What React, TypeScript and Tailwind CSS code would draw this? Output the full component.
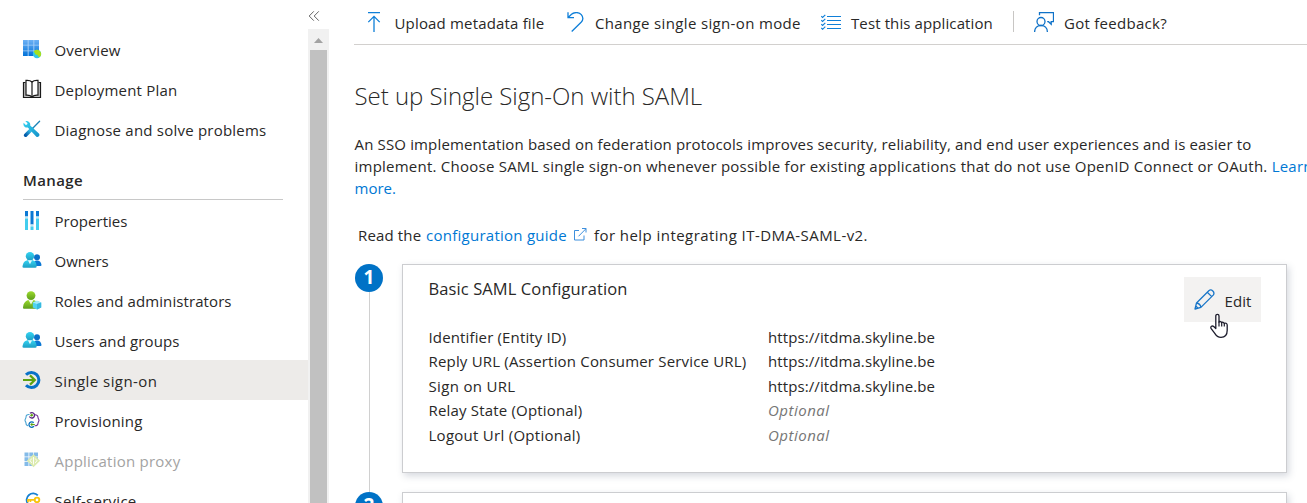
import React from "react";

type IconProps = { className?: string };

const OverviewIcon = () => (
  <svg width="20" height="20" viewBox="0 0 20 20">
    <defs>
      <linearGradient id="ov" x1="0" y1="0" x2="0" y2="1">
        <stop offset="0" stopColor="#6db1f5" />
        <stop offset="1" stopColor="#0272d8" />
      </linearGradient>
    </defs>
    <rect x="1" y="1" width="16" height="16" fill="#a9d0f8" />
    <path
      fill="url(#ov)"
      d="M1 1h4.700v4.700H1zM6.600 1h4.800v4.700H6.600zM12.300 1H17v4.700h-4.700zM1 6.600h4.700v4.800H1zM6.600 6.600h4.800v4.800H6.600zM12.300 6.600H17v4.800h-4.700zM1 12.300h4.700V17H1zM6.600 12.300h4.800V17H6.600zM12.300 12.300H17V17h-4.700z"
    />
    <circle cx="15" cy="15" r="4.200" fill="#32c8e6" />
    <path d="M12.300 11.800c1.600-1.400 4-1.300 5.600.2 1.500 1.500 1.700 3.800.4 5.500-.8.7-2 .6-2.300-.5-.2-1.200-.8-1.200-1.800-1.300-1.200 0-1-1.200-1.600-1.900-.5-.6-1.300-1-.3-2z" fill="#a8e01c" />
  </svg>
);

const BookIcon = () => (
  <svg width="20" height="20" viewBox="0 0 20 20" fill="none">
    <path d="M3.500 3.500H1.500v15h17v-15h-2" fill="#bdbdbd" stroke="#1a1a1a" strokeWidth="1.200" />
    <path d="M10 3C8.500 1.500 6 1.200 4 1.400v14.800c2.400-.2 4.600.1 6 2 1.400-1.900 3.600-2.200 6-2V1.400C14 1.200 11.500 1.500 10 3z" fill="#fff" stroke="#1a1a1a" strokeWidth="1.200" />
    <path d="M10 3v15" stroke="#1a1a1a" strokeWidth="1.200" />
  </svg>
);

const ToolsIcon = () => (
  <svg width="20" height="20" viewBox="0 0 20 20" fill="none">
    <defs>
      <linearGradient id="tl" x1="1" y1="0" x2="0" y2="1">
        <stop offset=".3" stopColor="#32b8e4" />
        <stop offset="1" stopColor="#0259a8" />
      </linearGradient>
      <linearGradient id="tl2" x1="0" y1="0" x2="1" y2="1">
        <stop offset="0" stopColor="#37d4f2" />
        <stop offset="1" stopColor="#1490c8" />
      </linearGradient>
    </defs>
    <path d="M17.600 2.200L10 10" stroke="#1b84b8" strokeWidth="1.300" strokeLinecap="round" />
    <path d="M9.800 9.900L3.600 16.200" stroke="url(#tl)" strokeWidth="3.600" strokeLinecap="round" />
    <path d="M3.300 2.100l2.200 2.100-.4 1.300-1.300.4-2.200-2.100c-.5 1.700 0 3.300 1.200 4.100.9.700 2 .8 3 .5l8.300 9c1.900 1.700 4.500-.8 2.800-2.800L8.200 6.500c.6-2.600-1.900-5.100-4.900-4.400z" fill="url(#tl2)" />
  </svg>
);

const PropertiesIcon = () => (
  <svg width="20" height="20" viewBox="0 0 20 20">
    <path fill="#0b78d4" d="M3 1h3v5.500H3zM8.500 1h3v13.500h-3zM14 1h3v5.500h-3z" />
    <path fill="#bfe6f5" d="M3 6.500h3v2H3zM8.500 14.500h3v2h-3zM14 6.500h3v2h-3z" />
    <path fill="#43cdee" d="M3 8.500h3V20H3zM8.500 16.500h3V20h-3zM14 8.500h3V20h-3z" />
  </svg>
);

const PeopleIcon = () => (
  <svg width="20" height="20" viewBox="0 -1 20 20">
    <defs>
      <linearGradient id="pp" x1="0" y1="0" x2="0" y2="1">
        <stop offset="0" stopColor="#34d4f3" />
        <stop offset="1" stopColor="#1e9fc4" />
      </linearGradient>
    </defs>
    <circle cx="15" cy="6.300" r="3" fill="#0b6fc8" />
    <path d="M11 15c0-3.600 1.300-5.600 4-5.600s4.300 2 4.500 4.600c0 .7-.3 1-.9 1z" fill="#0b78d4" />
    <circle cx="8" cy="5.200" r="4.200" fill="url(#pp)" />
    <path d="M.5 15.500C.9 11.700 2.700 9 8 9s6.600 2.700 6.600 6.500c0 .8-.4 1.200-1.100 1.200H1.500c-.7 0-1-.4-1-1.200z" fill="url(#pp)" />
    <path d="M5.900 9.200L8 13.200l2.100-4z" fill="#e6fafe" />
  </svg>
);

const RolesIcon = () => (
  <svg width="20" height="20" viewBox="0 0 20 20">
    <defs>
      <linearGradient id="rl" x1="0" y1="0" x2="0" y2="1">
        <stop offset="0" stopColor="#9bdb2c" />
        <stop offset="1" stopColor="#5e9e1c" />
      </linearGradient>
    </defs>
    <circle cx="9" cy="5.600" r="4.400" fill="url(#rl)" />
    <path d="M1 17.500C1.500 13 3.500 9.800 9 9.800s7 3.200 7.300 7.700c0 .9-.4 1.300-1.200 1.300H2.200C1.400 18.800 1 18.400 1 17.500z" fill="url(#rl)" />
    <path d="M6.500 10l2.500 4.600 2.500-4.600z" fill="#f2fbe4" />
    <path d="M15 10.700l4.200 1.700v5L15 19.500l-4.200-2.100v-5z" fill="#50d4f2" />
    <path d="M15 14l4.200-1.600L15 10.700l-4.200 1.700z" fill="#a3eafa" />
    <path d="M15 14v5.500l4.200-2.100v-5z" fill="#38b9e0" />
  </svg>
);

const SignOnIcon = () => (
  <svg width="20" height="20" viewBox="0 0 20 20" fill="none">
    <path d="M4 4.800A7.500 7.500 0 1 1 4 15.200" stroke="#0872c8" strokeWidth="3" />
    <path d="M1 10h11M8 5.400l4.800 4.600L8 14.600" stroke="#5ca30f" strokeWidth="2.200" />
  </svg>
);

const ProvisioningIcon = () => (
  <svg width="20" height="20" viewBox="0 0 20 20" fill="none">
    <path d="M7.500 4.600C5.300 4.200 4 5.300 4 7.200 4 8.500 3 9 3 10.200s1 1.700 1 3c0 1.500.7 2.300 2.200 2.500" stroke="#4da5d4" strokeWidth="1.100" />
    <path d="M12.500 4.800c2.200-.2 3.500.8 3.500 2.600 0 1.300 1 1.700 1 2.900s-1 1.700-1 3c0 1.800-1.400 2.600-3.400 2.400" stroke="#6d2f92" strokeWidth="1.100" />
    <path d="M7.400 6.500a2.700 2.700 0 1 0 .6-3.200" stroke="#5c2686" strokeWidth="1.300" />
    <path d="M11.700 12.800a2.700 2.700 0 1 0 .2 3.300" stroke="#0b70bd" strokeWidth="1.300" />
    <path d="M8 5.200h2.600M9.300 4l1.300 1.200-1.300 1.200M12.800 14.500H9M10.300 13.300L9 14.500l1.300 1.200" stroke="#5ca30f" strokeWidth="1.100" />
  </svg>
);

const ProxyIcon = () => (
  <svg width="20" height="20" viewBox="0 0 20 20">
    <path fill="#84bbe8" d="M2.500 2.500h4v4h-4zM7.300 2.500h4v4h-4zM12 2.500h4v4h-4zM2.500 7.300h4v4h-4zM7.300 7.300h4v4h-4zM12 7.300h4v4h-4zM2.500 12h4v4h-4zM7.300 12h4v4h-4z" />
    <path fill="#dcebaf" d="M11.500 4.300l6.600 6.500-6.600 6.500-6.600-6.500z" />
    <path fill="none" stroke="#fff" strokeWidth=".9" d="M11.500 7v7.500M9.800 8.500L8 10.700l1.800 2.200M13.200 8.500l1.800 2.200-1.800 2.200" />
  </svg>
);

const SelfServiceIcon = () => (
  <svg width="20" height="20" viewBox="0 0 20 20" fill="none">
    <path d="M15.800 5.400A6.500 6.500 0 1 0 14.500 15.500" stroke="#1681d2" strokeWidth="1.800" />
    <circle cx="15" cy="9.900" r="2.300" stroke="#f8c40a" strokeWidth="1.900" />
    <path d="M12.700 9.900H6v2.300M8.400 9.900v2" stroke="#f8c40a" strokeWidth="1.700" />
  </svg>
);

const UploadIcon = ({ className }: IconProps) => (
  <svg className={className} width="14" height="20" viewBox="0 0 14 20" fill="none" stroke="#0f7fd8" strokeWidth="1.300">
    <path d="M1 .7h12M7 20V4.500M1.300 10.100L7 4.400l5.700 5.700" />
  </svg>
);

const UndoIcon = ({ className }: IconProps) => (
  <svg className={className} width="17" height="20" viewBox="0 0 17 20" fill="none" stroke="#0f7fd8" strokeWidth="1.300">
    <path d="M1 .2v5.500h6M1.200 5.500L4.500 2.200C7.500-.1 12 0 14.300 2.700c2 2.400 1.800 5.400-.2 7.600L4.700 19.500" />
  </svg>
);

const ChecklistIcon = ({ className }: IconProps) => (
  <svg className={className} width="20" height="16" viewBox="0 0 20 16" fill="none" stroke="#0f7fd8">
    <path strokeWidth="1.200" d="M6 2.500h14M6 6.500h14M6 10.500h14M6 14.500h14" />
    <path strokeWidth="1.100" d="M.3 2.200l1.300 1.300L4.300.8M.3 6.200l1.300 1.300 2.700-2.700M.3 10.200l1.300 1.300 2.700-2.700M.3 14l1.300 1.300 2.700-2.700" />
  </svg>
);

const FeedbackIcon = ({ className }: IconProps) => (
  <svg className={className} width="20" height="20" viewBox="0 0 20 20" fill="none" stroke="#0f72c8" strokeWidth="1.300">
    <path d="M5.500 3.200V.7h14v9h-2.300v2.600l-2.700-2.600h-1.300" />
    <circle cx="7" cy="9.500" r="4" />
    <path d="M.6 20c0-4 2.700-6.500 6.400-6.500s6.400 2.500 6.400 6.500" />
  </svg>
);

const ExternalIcon = ({ className }: IconProps) => (
  <svg className={className} width="13" height="13" viewBox="0 0 13 13" fill="none" stroke="#3d8fdd" strokeWidth="1">
    <path d="M5 2.500H.5v9.500h9.500V7.500M8 .5h4v4M12 .7L4.500 8.300" />
  </svg>
);

const PencilIcon = ({ className }: IconProps) => (
  <svg className={className} width="21" height="21" viewBox="0 0 21 21" fill="none" stroke="#1976c8" strokeWidth="1.300" strokeLinejoin="round">
    <path d="M1 20l1.500-6L14.800 1.700c2.700-2.300 6.600 1.500 4.400 4.400L6.900 18.400zM13.300 3.200l4.400 4.400M2.500 14c2.400.3 4 1.800 4.400 4.400M1.800 17l2 2" />
  </svg>
);

const HandCursor = () => (
  <svg className="absolute left-[25px] top-[36px]" width="20" height="26" viewBox="0 0 20 26">
    <path
      d="M6.800 15.500V3c0-2.300 3.200-2.300 3.200 0v6.200c.6-1.100 2.300-.8 2.600.5.800-.9 2.400-.5 2.600.8 1.200-.9 3-.3 3 1.600v5.200c0 4.400-2.400 7-6.200 7-3.300 0-4.800-1.500-6.400-4.200l-3.600-4.700c-.9-1.700 1.200-3.200 2.700-1.900z"
      fill="#fff"
      stroke="#1c1c2c"
      strokeWidth="1.300"
      strokeLinejoin="round"
    />
    <path d="M10 8.500v5M12.700 9.800v3.700M15.300 10.500v3" stroke="#1c1c2c" strokeWidth="1.200" />
  </svg>
);

type Item = { label: string; track: string; icon: React.ReactNode; active?: boolean; muted?: boolean };

const topItems: Item[] = [
  { label: "Overview", track: "tracking-[0.120px]", icon: <OverviewIcon /> },
  { label: "Deployment Plan", track: "tracking-[0.200px]", icon: <BookIcon /> },
  { label: "Diagnose and solve problems", track: "tracking-[0.220px]", icon: <ToolsIcon /> },
];

const manageItems: Item[] = [
  { label: "Properties", track: "tracking-[0.040px]", icon: <PropertiesIcon /> },
  { label: "Owners", track: "tracking-normal", icon: <PeopleIcon /> },
  { label: "Roles and administrators", track: "tracking-[0.090px]", icon: <RolesIcon /> },
  { label: "Users and groups", track: "tracking-[0.120px]", icon: <PeopleIcon /> },
  { label: "Single sign-on", track: "tracking-[0.440px]", icon: <SignOnIcon />, active: true },
  { label: "Provisioning", track: "tracking-[0.190px]", icon: <ProvisioningIcon /> },
  { label: "Application proxy", track: "tracking-[0.240px]", icon: <ProxyIcon />, muted: true },
  { label: "Self-service", track: "tracking-[0.260px]", icon: <SelfServiceIcon /> },
];

function NavItem({ item }: { item: Item }) {
  return (
    <li className={`flex h-10 items-center pl-[22px] ${item.active ? "bg-[#edebe9]" : ""}`}>
      <span className="mr-[12.500px] shrink-0">{item.icon}</span>
      <span className={`whitespace-nowrap pt-[2px] leading-5 ${item.track} ${item.muted ? "text-[#a3a3a3]" : ""}`}>{item.label}</span>
    </li>
  );
}

const fields = [
  { name: "Identifier (Entity ID)", track: "tracking-[0.145px]", value: "https://itdma.skyline.be" },
  { name: "Reply URL (Assertion Consumer Service URL)", track: "tracking-[0.180px]", value: "https://itdma.skyline.be" },
  { name: "Sign on URL", track: "tracking-[0.330px]", value: "https://itdma.skyline.be" },
  { name: "Relay State (Optional)", track: "tracking-[0.180px]", value: "" },
  { name: "Logout Url (Optional)", track: "tracking-[0.270px]", value: "" },
];

const StepBadge = ({ n }: { n: number }) => (
  <span className="flex size-[28px] shrink-0 items-center justify-center rounded-full bg-[#0072c6] pb-px text-[19px] leading-none font-bold text-white">{n}</span>
);

export default function App() {
  return (
    <div className="flex h-[503px] w-[1307px] overflow-hidden bg-white font-['Open_Sans',sans-serif] text-[15px] text-[#292827]">
      <aside className="flex w-[308px] shrink-0 flex-col pt-[29px]">
        <ul className="shrink-0">
          {topItems.map((i) => (
            <NavItem key={i.label} item={i} />
          ))}
        </ul>
        <h2 className="ml-[23px] h-[51px] w-[260px] shrink-0 border-b border-[#c8c8c8] pt-[21px] leading-5 font-semibold tracking-[0.380px]">Manage</h2>
        <ul className="shrink-0">
          {manageItems.map((i) => (
            <NavItem key={i.label} item={i} />
          ))}
        </ul>
      </aside>

      <div className="flex w-[21px] shrink-0 flex-col items-center">
        <div className="flex h-[29px] w-full shrink-0 pt-[11px]">
          <svg width="12" height="10" viewBox="0 0 12 10" fill="none" stroke="#666" strokeWidth="1">
            <path d="M5.800.3L1.200 5l4.600 4.700M10.800.3L6.200 5l4.600 4.700" />
          </svg>
        </div>
        <div className="flex w-full grow flex-col items-center bg-[#f1f1f1] pt-[9px]">
          <svg className="shrink-0" width="9" height="5" viewBox="0 0 9 5">
            <path d="M4.500 0L9 5H0z" fill="#a3a3a3" />
          </svg>
          <div className="mt-[7px] w-[17px] grow bg-[#c1c1c1]" />
        </div>
      </div>

      <main className="ml-[25px] w-[953px] shrink-0">
        <div className="flex h-[45px] border-b border-[#d2d0ce] pt-[11px] leading-[25px] whitespace-nowrap">
          <UploadIcon className="mt-px ml-[13px]" />
          <span className="ml-[13.500px] w-[172.500px] tracking-[0.170px]">Upload metadata file</span>
          <UndoIcon className="mt-px" />
          <span className="ml-[11px] w-[226px] tracking-[0.350px]">Change single sign-on mode</span>
          <ChecklistIcon className="mt-[3px]" />
          <span className="ml-[10px] w-[162px] tracking-[0.110px]">Test this application</span>
          <span className="h-[21px] w-px bg-[#c8c6c4]" />
          <FeedbackIcon className="mt-px ml-5" />
          <span className="ml-[10px] tracking-[0.280px]">Got feedback?</span>
        </div>

        <h1 className="mt-[35px] h-[53px] pl-[0.500px] text-[24px] leading-8 font-light tracking-[-0.030px] whitespace-nowrap">Set up Single Sign-On with SAML</h1>

        <p className="pl-[0.500px] leading-[22px] whitespace-nowrap">
          <span className="block tracking-[0.150px]">An SSO implementation based on federation protocols improves security, reliability, and end user experiences and is easier to</span>
          <span className="block tracking-[0.237px]">
            implement. Choose SAML single sign-on whenever possible for existing applications that do not use OpenID Connect or OAuth. <a className="text-[#0078d4]">Learn</a>
          </span>
          <a className="block text-[#0078d4]">more.</a>
        </p>

        <p className="mt-[25px] flex h-[40px] pl-1 leading-[22px] whitespace-nowrap">
          <span className="w-[68px] tracking-[0.150px]">Read the</span>
          <a className="w-[148px] tracking-[0.260px] text-[#0078d4]">configuration guide</a>
          <ExternalIcon className="mt-[4px]" />
          <span className="ml-[7px] tracking-[0.440px]">for help integrating IT-DMA-SAML-v2.</span>
        </p>

        <section className="flex h-[228px]">
          <div className="ml-px flex w-[28px] shrink-0 flex-col items-center">
            <StepBadge n={1} />
            <span className="ml-px w-px grow bg-[#d0d0d0]" />
          </div>
          <div className="ml-[19px] flex h-[209px] w-[885px] justify-between border border-[#cccdd0] pl-[25.500px] shadow-[2px_3px_7px_rgba(70,80,110,0.220)]">
            <div className="pt-[12px]">
              <h3 className="h-[48px] text-[16.500px] leading-6 tracking-[0.100px]">Basic SAML Configuration</h3>
              <dl>
                {fields.map((f) => (
                  <div key={f.name} className="flex h-[24.400px] leading-6 whitespace-nowrap">
                    <dt className={`w-[339.500px] ${f.track}`}>{f.name}</dt>
                    {f.value ? <dd className="tracking-[0.090px]">{f.value}</dd> : <dd className="tracking-[0.500px] text-[#767676] italic">Optional</dd>}
                  </div>
                ))}
              </dl>
            </div>
            <button className="relative mt-3 mr-[25px] flex h-[45px] w-[77px] items-center bg-[#f3f2f1] pl-[10px]">
              <PencilIcon />
              <span className="ml-[9.500px] pt-[3px] leading-5 tracking-[0.100px]">Edit</span>
              <HandCursor />
            </button>
          </div>
        </section>
        <section className="flex h-[228px]">
          <div className="ml-px flex w-[28px] shrink-0 flex-col items-center">
            <StepBadge n={2} />
          </div>
          <div className="ml-[19px] h-[209px] w-[885px] border border-[#cccdd0] shadow-[2px_3px_7px_rgba(70,80,110,0.220)]" />
        </section>
      </main>
    </div>
  );
}
